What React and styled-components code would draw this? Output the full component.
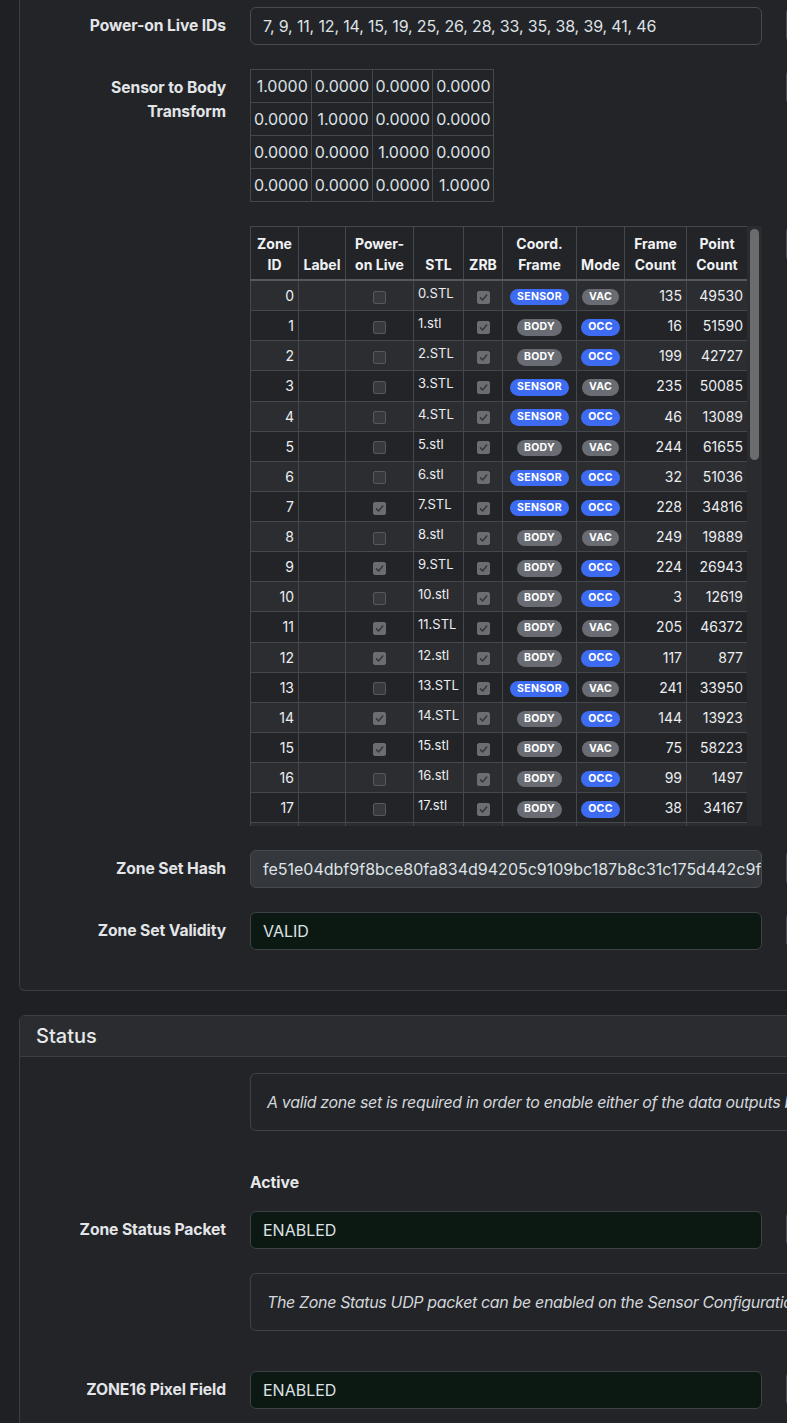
import React from "react";
import styled, { createGlobalStyle, css } from "styled-components";

const GlobalStyle = createGlobalStyle`
  html, body { margin: 0; padding: 0; overflow: hidden; background: #1e2023; }
  body {
    font-family: Inter, "Noto Sans", "Liberation Sans", sans-serif;
    color: #dee2e6;
    font-size: 16px;
    line-height: 1.5;
  }
  *, *::before, *::after { box-sizing: border-box; }
`;

const Page = styled.div`
  width: 1120px;
  padding-left: 19px;
`;

const Card = styled.section`
  background: #222428;
  border: 1px solid #3b3e43;
  border-radius: 6px;
  margin-bottom: 24px;
  ${(p) =>
    p.$cutTop &&
    css`
      border-top: none;
      border-top-left-radius: 0;
      border-top-right-radius: 0;
    `}
`;

const CardHeader = styled.div`
  padding: 8px 16px;
  background: #2a2c30;
  border-bottom: 1px solid #3b3e43;
  border-radius: 5px 5px 0 0;
  font-size: 20px;
  font-weight: 500;
  line-height: 24px;
  color: #e6e8ea;
`;

const CardBody = styled.div`
  padding: ${(p) => p.$top ?? 16}px 16px 16px 16px;
`;

const Row = styled.div`
  display: flex;
  gap: 24px;
  margin-bottom: ${(p) => p.$mb ?? 24}px;
`;

const Label = styled.div`
  width: 190px;
  flex-shrink: 0;
  text-align: right;
  font-weight: 700;
  font-size: 15.7px;
  letter-spacing: -0.1px;
  padding-top: 7px;
  line-height: 24px;
  color: #e3e5e8;
`;

const Value = styled.div`
  width: 512px;
  flex-shrink: 0;
`;

const Wide = styled.div`
  flex: 1;
  min-width: 0;
`;

const Side = styled.div`
  width: 60px;
  flex-shrink: 0;
`;

const SideButton = styled.div`
  height: 36px;
  border: 1px solid #4a4d53;
  border-radius: 6px;
  background: #26282c;
`;

const fieldVariants = {
  plain: css`
    background: #222428;
    border-color: #474a50;
  `,
  readonly: css`
    background: #34373c;
    border-color: #474a50;
  `,
  success: css`
    background: #0c1912;
    border-color: #3e4146;
  `,
};

const Field = styled.div`
  height: 38px;
  padding: 6px 4px 6px 12px;
  border: 1px solid;
  border-radius: 6px;
  line-height: 24px;
  white-space: nowrap;
  overflow: hidden;
  letter-spacing: ${(p) => (p.$tight ? "-0.15px" : "0")};
  color: #dee2e6;
  ${(p) => fieldVariants[p.$variant || "plain"]}
`;

const MatrixTable = styled.table`
  border-collapse: collapse;
  table-layout: fixed;
  width: 244px;
  td {
    border: 1px solid #44474c;
    padding: 4px 3px;
    text-align: right;
    line-height: 24px;
    height: 33px;
  }
`;

const ScrollFrame = styled.div`
  display: flex;
  width: 512px;
  height: 600px;
`;

const Viewport = styled.div`
  flex: 1;
  min-width: 0;
  overflow: hidden;
`;

const ScrollTrack = styled.div`
  width: 15px;
  flex-shrink: 0;
  padding: 3px 3px;
  background: #2a2b2e;
`;

const ScrollThumb = styled.div`
  height: 231px;
  border-radius: 5px;
  background: #6b6c6e;
`;

const ZoneTable = styled.table`
  border-collapse: collapse;
  table-layout: fixed;
  width: 100%;
  font-size: 14px;
  line-height: 21.12px;
  th,
  td {
    border: 1px solid #44474c;
    padding: 4px;
  }
  th {
    font-weight: 700;
    text-align: center;
    vertical-align: bottom;
    color: #f1f2f4;
    line-height: 21px;
    padding-top: 6px;
    border-bottom: 2px solid #55585d;
  }
  tbody tr:nth-child(odd) td {
    background: #2b2d31;
  }
`;

const Cell = styled.td`
  text-align: ${(p) => p.$align || "left"};
  vertical-align: middle;
  color: #eceef0;
  white-space: nowrap;
`;

const StlCell = styled.td`
  vertical-align: top;
  font-size: 13px;
  line-height: 18px;
  && {
    padding-top: 3px;
  }
  color: #eceef0;
  white-space: nowrap;
`;

const Badge = styled.span`
  display: inline-block;
  padding: 3px 7px 3px;
  font-size: 10.5px;
  font-weight: 700;
  line-height: 1;
  letter-spacing: 0.3px;
  color: #ffffff;
  border-radius: 999px;
  vertical-align: middle;
  background: ${(p) => (p.$tone === "blue" ? "#3d6cf2" : "#696d73")};
`;

const Box = styled.span`
  display: inline-flex;
  align-items: center;
  justify-content: center;
  width: 13px;
  height: 13px;
  border-radius: 2px;
  vertical-align: middle;
  border: 1px solid ${(p) => (p.$on ? "#6a6d71" : "#55585c")};
  background: ${(p) => (p.$on ? "#6a6d71" : "#37393d")};
`;

const Alert = styled.div`
  border: 1px solid #3e4147;
  border-radius: 6px;
  padding: 16px;
  line-height: 24px;
  font-style: italic;
  letter-spacing: -0.35px;
  color: #d3d6da;
  white-space: nowrap;
  overflow: hidden;
`;

const ColHeading = styled.div`
  font-weight: 700;
  font-size: 15.7px;
  line-height: 24px;
  color: #e6e8ea;
  margin-bottom: 16px;
`;

function Check({ on }) {
  return (
    <Box $on={on}>
      {on && (
        <svg width="9" height="9" viewBox="0 0 10 10">
          <path d="M1.6 5.4 L4 7.7 L8.6 2.2" fill="none" stroke="#34363a" strokeWidth="1.6" strokeLinecap="round" strokeLinejoin="round" />
        </svg>
      )}
    </Box>
  );
}

const liveIds = [7, 9, 11, 12, 14, 15, 19, 25, 26, 28, 33, 35, 38, 39, 41, 46];

const known = [
  ["0.STL", "S", "V", 135, 49530],
  ["1.stl", "B", "O", 16, 51590],
  ["2.STL", "B", "O", 199, 42727],
  ["3.STL", "S", "V", 235, 50085],
  ["4.STL", "S", "O", 46, 13089],
  ["5.stl", "B", "V", 244, 61655],
  ["6.stl", "S", "O", 32, 51036],
  ["7.STL", "S", "O", 228, 34816],
  ["8.stl", "B", "V", 249, 19889],
  ["9.STL", "B", "O", 224, 26943],
  ["10.stl", "B", "O", 3, 12619],
  ["11.STL", "B", "V", 205, 46372],
  ["12.stl", "B", "O", 117, 877],
  ["13.STL", "S", "V", 241, 33950],
  ["14.STL", "B", "O", 144, 13923],
  ["15.stl", "B", "V", 75, 58223],
  ["16.stl", "B", "O", 99, 1497],
  ["17.stl", "B", "O", 38, 34167],
];

const zones = Array.from({ length: 47 }, (_, i) => {
  if (i < known.length) {
    const [stl, f, m, fc, pc] = known[i];
    return { id: i, stl, frame: f, mode: m, fc, pc };
  }
  const seed = (i * 7919) % 997;
  return {
    id: i,
    stl: i % 2 ? `${i}.stl` : `${i}.STL`,
    frame: seed % 3 === 0 ? "S" : "B",
    mode: seed % 2 ? "O" : "V",
    fc: (seed * 13) % 250,
    pc: (seed * 6151) % 64000,
  };
});

const matrix = [
  ["1.0000", "0.0000", "0.0000", "0.0000"],
  ["0.0000", "1.0000", "0.0000", "0.0000"],
  ["0.0000", "0.0000", "1.0000", "0.0000"],
  ["0.0000", "0.0000", "0.0000", "1.0000"],
];

const colWidths = [48, 47, 68, 50, 39, 74, 48, 62, 61];

export default function App() {
  return (
    <>
      <GlobalStyle />
      <Page>
        <Card $cutTop>
          <CardBody $top={7}>
            <Row>
              <Label>Power-on Live IDs</Label>
              <Value>
                <Field $variant="plain" $tight>{liveIds.join(", ")}</Field>
              </Value>
              <Side>
                <SideButton />
              </Side>
            </Row>
            <Row>
              <Label>
                Sensor to Body
                <br />
                Transform
              </Label>
              <Value>
                <MatrixTable>
                  <tbody>
                    {matrix.map((r, i) => (
                      <tr key={i}>
                        {r.map((v, j) => (
                          <td key={j}>{v}</td>
                        ))}
                      </tr>
                    ))}
                  </tbody>
                </MatrixTable>
              </Value>
              <Side>
                <SideButton />
              </Side>
            </Row>
            <Row>
              <Label />
              <Value>
                <ScrollFrame>
                  <Viewport>
                    <ZoneTable>
                      <colgroup>
                        {colWidths.map((w, i) => (
                          <col key={i} style={{ width: w }} />
                        ))}
                      </colgroup>
                      <thead>
                        <tr>
                          <th>Zone ID</th>
                          <th>Label</th>
                          <th>Power-on Live</th>
                          <th>STL</th>
                          <th>ZRB</th>
                          <th>Coord. Frame</th>
                          <th>Mode</th>
                          <th>Frame Count</th>
                          <th>Point Count</th>
                        </tr>
                      </thead>
                      <tbody>
                        {zones.map((z) => (
                          <tr key={z.id}>
                            <Cell $align="right">{z.id}</Cell>
                            <Cell />
                            <Cell $align="center">
                              <Check on={liveIds.includes(z.id)} />
                            </Cell>
                            <StlCell>{z.stl}</StlCell>
                            <Cell $align="center">
                              <Check on />
                            </Cell>
                            <Cell $align="center">
                              <Badge $tone={z.frame === "S" ? "blue" : "gray"}>
                                {z.frame === "S" ? "SENSOR" : "BODY"}
                              </Badge>
                            </Cell>
                            <Cell $align="center">
                              <Badge $tone={z.mode === "O" ? "blue" : "gray"}>
                                {z.mode === "O" ? "OCC" : "VAC"}
                              </Badge>
                            </Cell>
                            <Cell $align="right">{z.fc}</Cell>
                            <Cell $align="right">{z.pc}</Cell>
                          </tr>
                        ))}
                      </tbody>
                    </ZoneTable>
                  </Viewport>
                  <ScrollTrack>
                    <ScrollThumb />
                  </ScrollTrack>
                </ScrollFrame>
              </Value>
              <Side>
                <SideButton />
              </Side>
            </Row>
            <Row>
              <Label>Zone Set Hash</Label>
              <Value>
                <Field $variant="readonly">
                  fe51e04dbf9f8bce80fa834d94205c9109bc187b8c31c175d442c9f7a03e6b1d
                </Field>
              </Value>
              <Side>
                <SideButton />
              </Side>
            </Row>
            <Row>
              <Label>Zone Set Validity</Label>
              <Value>
                <Field $variant="success">VALID</Field>
              </Value>
              <Side>
                <SideButton />
              </Side>
            </Row>
          </CardBody>
        </Card>

        <Card>
          <CardHeader>Status</CardHeader>
          <CardBody>
            <Row $mb={40}>
              <Label />
              <Wide>
                <Alert>
                  A valid zone set is required in order to enable either of the data outputs below.
                </Alert>
              </Wide>
            </Row>
            <Row $mb={0}>
              <Label />
              <Value>
                <ColHeading>Active</ColHeading>
              </Value>
            </Row>
            <Row>
              <Label>Zone Status Packet</Label>
              <Value>
                <Field $variant="success">ENABLED</Field>
              </Value>
              <Side>
                <SideButton />
              </Side>
            </Row>
            <Row $mb={40}>
              <Label />
              <Wide>
                <Alert>
                  The Zone Status UDP packet can be enabled on the Sensor Configuration page.
                </Alert>
              </Wide>
            </Row>
            <Row>
              <Label>ZONE16 Pixel Field</Label>
              <Value>
                <Field $variant="success">ENABLED</Field>
              </Value>
              <Side>
                <SideButton />
              </Side>
            </Row>
          </CardBody>
        </Card>
      </Page>
    </>
  );
}
